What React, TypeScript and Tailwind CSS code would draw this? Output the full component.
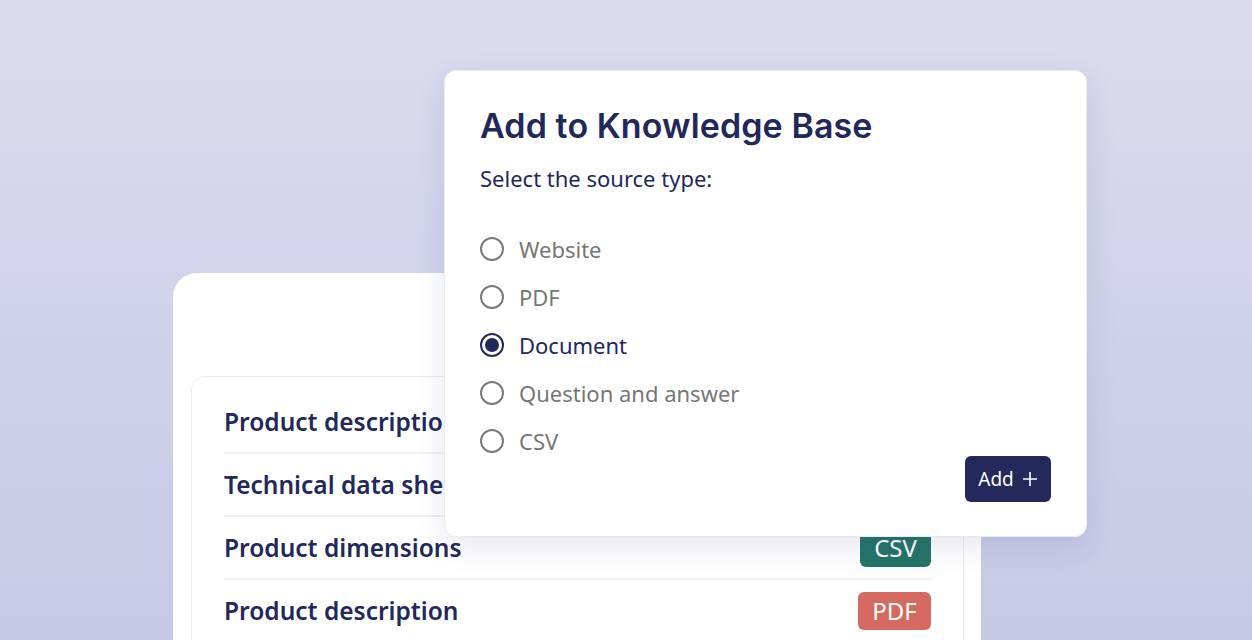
import React from "react";

const rows = [
  { label: "Product description", badge: "PDF" },
  { label: "Technical data sheet", badge: "PDF" },
  { label: "Product dimensions", badge: "CSV" },
  { label: "Product description", badge: "PDF" },
];

const options = [
  { label: "Website", selected: false },
  { label: "PDF", selected: false },
  { label: "Document", selected: true },
  { label: "Question and answer", selected: false },
  { label: "CSV", selected: false },
];

function Badge({ type }: { type: string }) {
  const cls =
    type === "CSV"
      ? "bg-[#247468] w-[71px]"
      : "bg-[#d66a60] w-[73px]";
  return (
    <div
      className={`${cls} h-[38px] rounded-[6px] flex items-center justify-center text-white text-[24px] leading-none`}
    >
      {type}
    </div>
  );
}

function Radio({ selected }: { selected: boolean }) {
  if (selected) {
    return (
      <div className="w-[24px] h-[24px] rounded-full border-[2.5px] border-[#23285a] flex items-center justify-center shrink-0">
        <div className="w-[14px] h-[14px] rounded-full bg-[#23285a]" />
      </div>
    );
  }
  return <div className="w-[24px] h-[24px] rounded-full border-2 border-[#7a7a7a] shrink-0" />;
}

export default function App() {
  return (
    <div
      className="relative w-full h-[640px] overflow-hidden bg-gradient-to-b from-[#dbdcee] to-[#c4cae6]"
      style={{ fontFamily: '"Noto Sans", "Open Sans", sans-serif' }}
    >
      {/* back card */}
      <div className="ml-[173px] mt-[273px] w-[808px] h-[420px] bg-white rounded-[24px] pt-[103px] pl-[18px] pr-[17px]">
        <div className="border border-[#ececf3] rounded-[14px] px-[32px] pt-[14px] h-[400px]">
          {rows.map((r, i) => (
            <div
              key={i}
              className="h-[63px] border-b-2 border-[#f0f0f5] flex items-center justify-between"
            >
              <span className="text-[24.5px] font-semibold text-[#23285a] pt-[2px]">
                {r.label}
              </span>
              <Badge type={r.badge} />
            </div>
          ))}
        </div>
      </div>

      {/* popup */}
      <div className="absolute left-[444px] top-[70px] w-[643px] h-[467px] bg-white rounded-[12px] border border-[#e9e9f2] shadow-[0_10px_30px_rgba(50,60,130,0.12)] pt-[33px] pl-[35px] pr-[35px]">
        <h1
          className="text-[34px] leading-[44px] font-semibold text-[#23285a] tracking-[0.1px]"
          style={{ fontFamily: "Inter, sans-serif" }}
        >
          Add to Knowledge Base
        </h1>
        <p className="mt-[16px] text-[22px] leading-[28px] text-[#23285a]">
          Select the source type:
        </p>
        <div className="mt-[33px] flex justify-between items-end">
          <div className="flex flex-col">
            {options.map((o) => (
              <div key={o.label} className="h-[48px] flex items-center gap-[15px]">
                <Radio selected={o.selected} />
                <span
                  className={`text-[22px] ${o.selected ? "text-[#23285a]" : "text-[#767676]"}`}
                >
                  {o.label}
                </span>
              </div>
            ))}
          </div>
          <button className="mb-[-37px] w-[86px] h-[46px] rounded-[6px] bg-[#23295a] text-white text-[19px] flex items-center justify-center gap-[8px]">
            <span>Add</span>
            <svg width="16" height="16" viewBox="0 0 16 16" fill="none" stroke="white" strokeWidth="1.6">
              <path d="M8 1v14M1 8h14" />
            </svg>
          </button>
        </div>
      </div>
    </div>
  );
}
